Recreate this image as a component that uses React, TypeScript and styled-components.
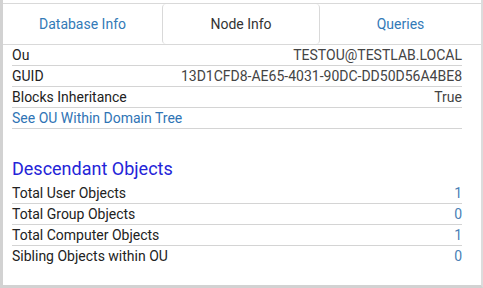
import styled, { createGlobalStyle } from 'styled-components';

interface Row {
    label: string
    value: string
}

const ouRows: Array<Row> = [
    { label: 'Ou', value: 'TESTOU@TESTLAB.LOCAL' },
    { label: 'GUID', value: '13D1CFD8-AE65-4031-90DC-DD50D56A4BE8' },
    { label: 'Blocks Inheritance', value: 'True' },
]

const descendantRows: Array<Row> = [
    { label: 'Total User Objects', value: '1' },
    { label: 'Total Group Objects', value: '0' },
    { label: 'Total Computer Objects', value: '1' },
    { label: 'Sibling Objects within OU', value: '0' },
]

const tabs = ['Database Info', 'Node Info', 'Queries']

const App: React.FC = () => {
    return (
        <>
            <GlobalStyle />
            <Panel>
                <TabBar>
                    {tabs.map((tab) => (
                        <Tab key={tab} $active={tab === 'Node Info'}>{tab}</Tab>
                    ))}
                </TabBar>

                <Content>
                    <Table>
                        {ouRows.map((row) => (
                            <TableRow key={row.label}>
                                <Label>{row.label}</Label>
                                <Value>{row.value}</Value>
                            </TableRow>
                        ))}
                        <TableRow>
                            <LinkText>See OU Within Domain Tree</LinkText>
                        </TableRow>
                    </Table>

                    <SectionTitle>Descendant Objects</SectionTitle>
                    <Table>
                        {descendantRows.map((row, i) => (
                            <TableRow key={row.label} $last={i === descendantRows.length - 1}>
                                <Label>{row.label}</Label>
                                <CountValue>{row.value}</CountValue>
                            </TableRow>
                        ))}
                    </Table>
                </Content>
            </Panel>
        </>
    );
};

const GlobalStyle = createGlobalStyle`
    html, body {
        margin: 0;
        padding: 0;
        background: #fff;
        font-family: Roboto, "Liberation Sans", Arial, sans-serif;
    }
`

const Panel = styled.div`
    width: 483px;
    height: 288px;
    box-sizing: border-box;
    padding-top: 3px;
    border-left: 3px solid #d2d2d2;
    border-right: 2px solid #dcdcdc;
    border-bottom: 3px solid #d2d2d2;
    background: #fff;
    display: flex;
    flex-direction: column;
`

const TabBar = styled.div`
    display: grid;
    grid-template-columns: 159px 158px 1fr;
    height: 40px;
    border-top: 1px solid #d9d9d9;
    border-bottom: 1px solid #d9d9d9;
    box-sizing: content-box;
`

const Tab = styled.div<{ $active?: boolean }>`
    display: flex;
    align-items: center;
    justify-content: center;
    font-size: 14px;
    color: ${(p) => (p.$active ? '#333' : '#337ab7')};
    border-left: ${(p) => (p.$active ? '1px solid #d9d9d9' : 'none')};
    border-right: ${(p) => (p.$active ? '1px solid #d9d9d9' : 'none')};
    border-radius: ${(p) => (p.$active ? '4px' : '0')};
`

const Content = styled.div`
    padding: 0 19px 0 9px;
    display: flex;
    flex-direction: column;
`

const Table = styled.div`
    display: flex;
    flex-direction: column;
`

const TableRow = styled.div<{ $last?: boolean }>`
    display: flex;
    justify-content: space-between;
    align-items: center;
    height: 20px;
    border-bottom: ${(p) => (p.$last ? 'none' : '1px solid #d4d4d4')};
    font-size: 14px;
`

const Label = styled.span`
    color: #222;
`

const Value = styled.span`
    color: #444;
`

const CountValue = styled.span`
    color: #4a7fb5;
`

const LinkText = styled.span`
    color: #2f74b5;
`

const SectionTitle = styled.div`
    margin: 29px 0 3px;
    line-height: 22px;
    font-size: 18px;
    color: #2424d8;
`

export default App;
